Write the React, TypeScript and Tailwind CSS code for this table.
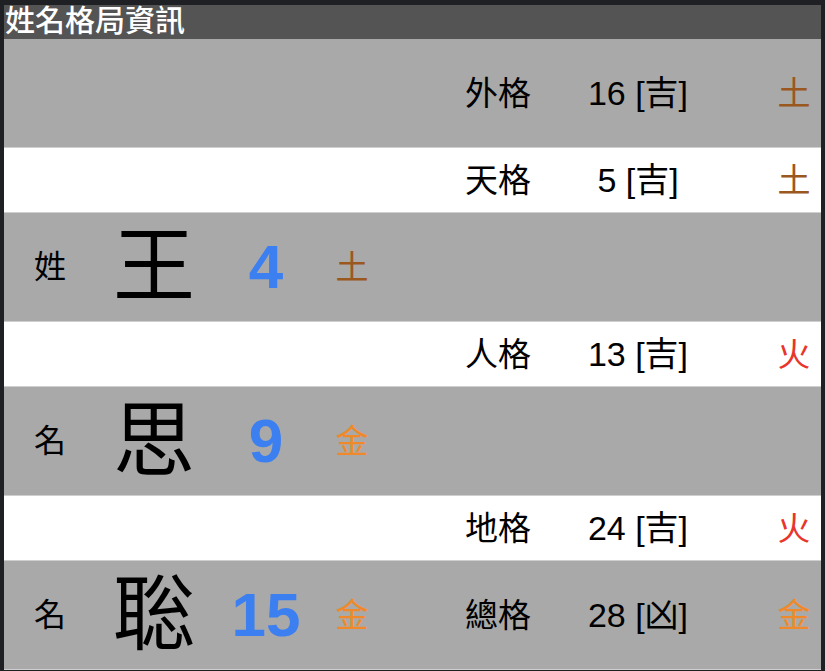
import * as React from "react";

type Row =
    | { kind: "name"; label: string; char: string; strokes: number; element: Element; grid?: Grid }
    | { kind: "grid"; grid: Grid };

type Element = "土" | "金" | "火";

interface Grid {
    name: string;
    value: string;
    element: Element;
}

const elementColor: Record<Element, string> = {
    土: "text-[#9b581e]",
    金: "text-[#f0892a]",
    火: "text-[#e8352d]",
};

const rows: Row[] = [
    { kind: "grid", grid: { name: "外格", value: "16 [吉]", element: "土" } },
    { kind: "grid", grid: { name: "天格", value: "5 [吉]", element: "土" } },
    { kind: "name", label: "姓", char: "王", strokes: 4, element: "土" },
    { kind: "grid", grid: { name: "人格", value: "13 [吉]", element: "火" } },
    { kind: "name", label: "名", char: "思", strokes: 9, element: "金" },
    { kind: "grid", grid: { name: "地格", value: "24 [吉]", element: "火" } },
    {
        kind: "name",
        label: "名",
        char: "聡",
        strokes: 15,
        element: "金",
        grid: { name: "總格", value: "28 [凶]", element: "金" },
    },
];

function GridCells({ grid }: { grid?: Grid }) {
    if (!grid) return null;
    return (
        <>
            <div className="col-start-6 text-center text-[33px]">{grid.name}</div>
            <div className="col-start-7 text-center text-[34px]">{grid.value}</div>
            <div className={`col-start-9 text-center text-[33px] ${elementColor[grid.element]}`}>
                {grid.element}
            </div>
        </>
    );
}

export default function App() {
    return (
        <div
            className="w-[825px] h-[671px] bg-[#1f2023] pt-[5px] px-[4px] overflow-hidden"
            style={{ fontFamily: '"Liberation Sans", "Noto Sans CJK TC", sans-serif' }}
        >
            <div className="h-[34px] bg-[#545454] text-white text-[30px] leading-[32px] pl-[1px] font-medium">
                姓名格局資訊
            </div>
            <div className="flex flex-col">
                {rows.map((row, i) => {
                    const gray = i % 2 === 0;
                    return (
                        <div
                            key={i}
                            className={`grid grid-cols-[92px_116px_108px_64px_64px_100px_180px_40px_52px_1fr] items-center leading-none text-black border-b border-[#cfcfcf] ${
                                gray ? "h-[109px] bg-[#a9a9a9]" : "h-[65px] bg-white"
                            }`}
                        >
                            {row.kind === "name" ? (
                                <>
                                    <div className="col-start-1 text-center text-[32px]">{row.label}</div>
                                    <div className="col-start-2 text-center text-[82px]">{row.char}</div>
                                    <div className="col-start-3 text-center text-[62px] font-bold text-[#3b7ff0]">
                                        {row.strokes}
                                    </div>
                                    <div className={`col-start-4 text-center text-[33px] ${elementColor[row.element]}`}>
                                        {row.element}
                                    </div>
                                    <GridCells grid={row.grid} />
                                </>
                            ) : (
                                <GridCells grid={row.grid} />
                            )}
                        </div>
                    );
                })}
            </div>
        </div>
    );
}
